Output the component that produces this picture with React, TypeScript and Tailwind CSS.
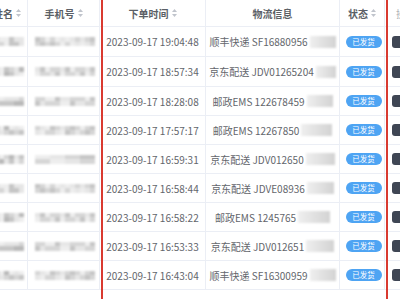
import React from "react";

type Row = {
  time: string;
  carrier: string;
  blurW: number;
  seed: number;
};

const rows: Row[] = [
  { time: "2023-09-17 19:04:48", carrier: "顺丰快递 SF16880956", blurW: 26, seed: 1 },
  { time: "2023-09-17 18:57:34", carrier: "京东配送 JDV01265204", blurW: 20, seed: 2 },
  { time: "2023-09-17 18:28:08", carrier: "邮政EMS 122678459", blurW: 26, seed: 3 },
  { time: "2023-09-17 17:57:17", carrier: "邮政EMS 12267850", blurW: 31, seed: 4 },
  { time: "2023-09-17 16:59:31", carrier: "京东配送 JDV012650", blurW: 29, seed: 5 },
  { time: "2023-09-17 16:58:44", carrier: "京东配送 JDVE08936", blurW: 27, seed: 6 },
  { time: "2023-09-17 16:58:22", carrier: "邮政EMS 1245765", blurW: 32, seed: 7 },
  { time: "2023-09-17 16:53:33", carrier: "京东配送 JDV012651", blurW: 28, seed: 8 },
  { time: "2023-09-17 16:43:04", carrier: "顺丰快递 SF16300959", blurW: 26, seed: 9 },
];

const rowHeights = [
  "h-[30px]",
  "h-[30px]",
  "h-[29px]",
  "h-[29px]",
  "h-[29px]",
  "h-[29px]",
  "h-[29px]",
  "h-[29px]",
  "h-[29px]",
];

const shades = [
  "bg-[#e6e6e6]",
  "bg-[#d6d6d6]",
  "bg-[#c6c6c6]",
  "bg-[#b9b9b9]",
  "bg-[#eeeeee]",
];

function Mosaic({ cols, seed, light }: { cols: number; seed: number; light?: boolean }) {
  const cells = [];
  for (let i = 0; i < cols * 2; i++) {
    let s = (i * 7 + seed * 13 + (i % 3) * seed) % 5;
    if (light && s === 3) s = 1;
    cells.push(<div key={i} className={`h-[4.5px] w-[5px] ${shades[s]}`} />);
  }
  return (
    <div className="flex flex-wrap blur-[0.8px]" style={{ width: cols * 5 }}>
      {cells}
    </div>
  );
}

function SortIcon() {
  return (
    <svg width="5" height="8" viewBox="0 0 5 8" className="shrink-0">
      <polygon points="2.5,0 5,3 0,3" fill="#c0c4cc" />
      <polygon points="0,5 5,5 2.5,8" fill="#c0c4cc" />
    </svg>
  );
}

const cell = "flex shrink-0 items-center border-r border-[#ebeef5]";

export default function App() {
  return (
    <div
      className="relative h-[299px] w-[400px] overflow-hidden bg-white text-[10px] text-[#63666c]"
      style={{ fontFamily: '"Noto Sans CJK SC", "Noto Sans", sans-serif' }}
    >
      <div className="ml-[-13px] w-[520px]">
        {/* header */}
        <div className="flex h-[27px] border-b border-[#ebeef5] font-bold text-[#5b5f66]">
          <div className={`${cell} w-[41px] justify-center gap-[3px]`}>
            姓名
            <SortIcon />
          </div>
          <div className={`${cell} w-[72px] justify-center gap-[3px]`}>
            手机号
            <SortIcon />
          </div>
          <div className={`${cell} w-[106px] justify-center gap-[3px]`}>
            下单时间
            <SortIcon />
          </div>
          <div className={`${cell} w-[134px] justify-center`}>物流信息</div>
          <div className={`${cell} w-[45px] justify-center gap-[3px]`}>
            状态
            <SortIcon />
          </div>
          <div className={`${cell} w-[120px] pl-[11px] font-normal text-[#b0b3b8]`}>操作</div>
        </div>

        {rows.map((r, i) => (
          <div key={i} className={`flex ${rowHeights[i]} border-b border-[#ebeef5]`}>
            <div className={`${cell} w-[41px] justify-end pr-[3px]`}>
              <Mosaic cols={7} seed={r.seed} />
            </div>
            <div className={`${cell} w-[72px] justify-center pl-[2px]`}>
              <Mosaic cols={12} seed={r.seed + 3} light />
            </div>
            <div className={`${cell} w-[106px] justify-center`}>{r.time}</div>
            <div className={`${cell} w-[134px] justify-center`}>
              <span className="whitespace-nowrap">{r.carrier}</span>
              <span
                className="ml-[2px] inline-block h-[12px] bg-gradient-to-r from-[#efefef] to-[#d3d3d3] blur-[1px]"
                style={{ width: r.blurW }}
              />
            </div>
            <div className={`${cell} w-[45px] justify-center pl-[3px]`}>
              <span className="flex h-[12px] w-[36px] items-center justify-center rounded-full bg-[#4ea4f3] text-[7.5px] text-white">
                已发货
              </span>
            </div>
            <div className={`${cell} w-[120px] pl-[7px]`}>
              <span className="h-[12px] w-[50px] rounded-[3px] bg-[#3f4654]" />
            </div>
          </div>
        ))}
      </div>

      {/* red highlight box */}
      <div className="pointer-events-none absolute left-[101px] top-[-6px] h-[320px] w-[287px] border-2 border-[#d93a30]" />
    </div>
  );
}
